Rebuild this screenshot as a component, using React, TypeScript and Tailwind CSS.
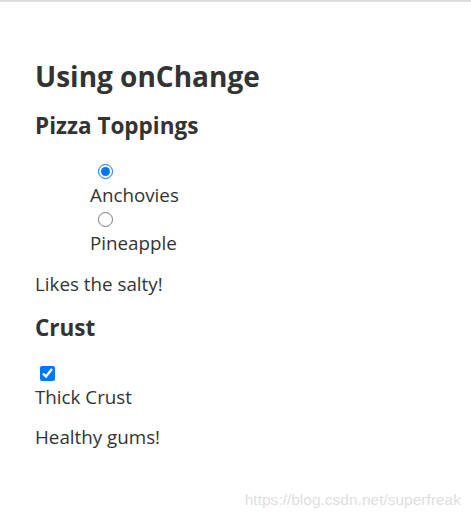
import React, { useState } from "react"

const toppings = ["Anchovies", "Pineapple"]

export default function App() {
  const [topping, setTopping] = useState("Anchovies")
  const [thick, setThick] = useState(true)

  return (
    <div className="relative min-h-[517px] bg-white border-t-2 border-[#dcdce0] text-[#333] font-['Open_Sans',sans-serif]">
      <div className="pl-[35px] pt-[58px]">
        <h2 className="text-[28px] leading-8 font-bold">Using onChange</h2>

        <h3 className="mt-[20px] text-[22.5px] leading-7 font-bold">Pizza Toppings</h3>
        <div className="mt-[19px] pl-[55px] text-[18.8px] leading-6">
          {toppings.map((t) => (
            <div key={t}>
              <div className="h-6 flex items-center">
                <input
                  type="radio"
                  name="topping"
                  className="ml-2 m-0 w-[15px] h-[15px]"
                  checked={topping === t}
                  onChange={() => setTopping(t)}
                />
              </div>
              <div>{t}</div>
            </div>
          ))}
        </div>
        <p className="mt-[17px] text-[18.8px] leading-6">
          {topping === "Anchovies" ? "Likes the salty!" : "Likes it sweet!"}
        </p>

        <h3 className="mt-[18px] text-[22.5px] leading-7 font-bold">Crust</h3>
        <div className="mt-[19px] text-[18.8px] leading-6">
          <div className="h-6 flex items-center">
            <input
              type="checkbox"
              className="ml-[5px] m-0 w-[15px] h-[15px]"
              checked={thick}
              onChange={() => setThick(!thick)}
            />
          </div>
          <div>Thick Crust</div>
        </div>
        <p className="mt-4 text-[18.8px] leading-6">
          {thick ? "Healthy gums!" : "Thin crust it is."}
        </p>
      </div>

      <div className="absolute right-[10px] top-[486px] text-[15.5px] text-[#dedede] font-['Liberation_Sans',sans-serif]">
        https://blog.csdn.net/superfreak
      </div>
    </div>
  )
}
